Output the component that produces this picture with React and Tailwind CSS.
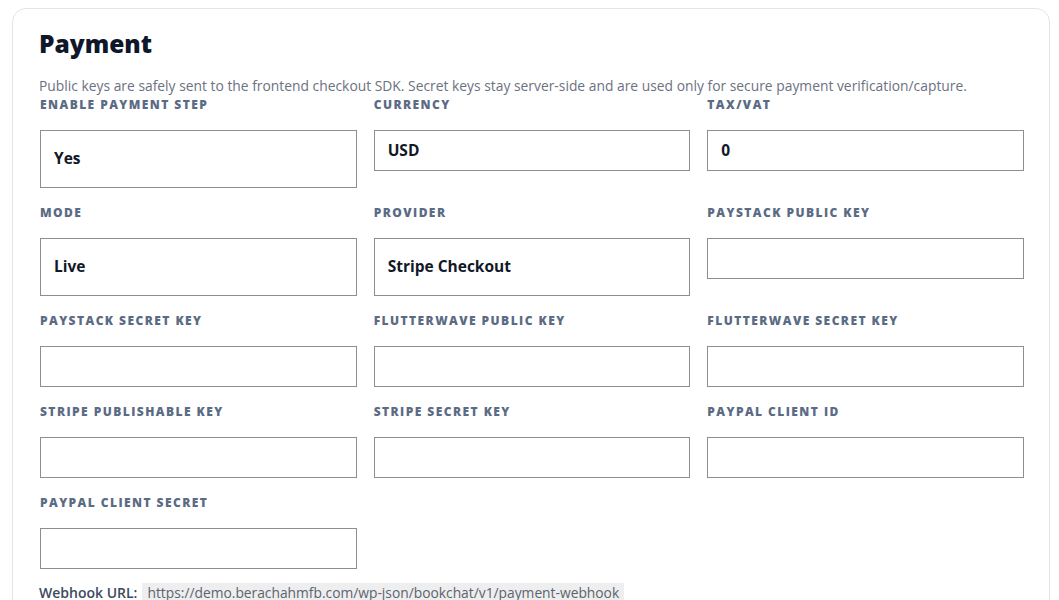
const fields = [
  { label: "Enable Payment Step", value: "Yes", select: true },
  { label: "Currency", value: "USD" },
  { label: "Tax/VAT", value: "0" },
  { label: "Mode", value: "Live", select: true },
  { label: "Provider", value: "Stripe Checkout", select: true },
  { label: "Paystack Public Key", value: "" },
  { label: "Paystack Secret Key", value: "" },
  { label: "Flutterwave Public Key", value: "" },
  { label: "Flutterwave Secret Key", value: "" },
  { label: "Stripe Publishable Key", value: "" },
  { label: "Stripe Secret Key", value: "" },
  { label: "PayPal Client ID", value: "" },
  { label: "PayPal Client Secret", value: "" },
];

const Field = ({ label, value, select }) => (
  <div className="flex flex-col">
    <label className="mb-[17px] h-4 text-[12px] font-extrabold uppercase leading-4 tracking-[0.12em] text-[#5b6b84]">
      {label}
    </label>
    <div
      className={
        "flex items-center border border-[#8c8c92] bg-white px-[13px] text-[15.5px] font-bold text-[#111827] " +
        (select ? "h-[58px]" : "h-[41px]")
      }
    >
      {value}
    </div>
  </div>
);

export default function App() {
  return (
    <div
      className="min-h-screen bg-white pl-3 pr-[9px] pt-2"
      style={{ fontFamily: '"Open Sans", "Noto Sans", sans-serif' }}
    >
      <div className="rounded-[14px] border border-[#dfe6ef] bg-white pb-10 pl-[26px] pr-[25px] pt-[19px]">
        <h2 className="h-8 text-[24.5px] font-extrabold leading-8 text-[#0f172a]">
          Payment
        </h2>
        <p className="mt-4 h-5 text-[13.85px] leading-5 text-[#6b7280]">
          Public keys are safely sent to the frontend checkout SDK. Secret keys
          stay server-side and are used only for secure payment
          verification/capture.
        </p>
        <div className="mt-px grid grid-cols-3 gap-x-[17px] gap-y-[17px] pl-px">
          {fields.map((f) => (
            <Field key={f.label} {...f} />
          ))}
        </div>
        <div className="mt-[14px] flex items-center gap-[5px] text-[14px] leading-5">
          <span className="font-semibold text-[#3d4a5c]">Webhook URL:</span>
          <code
            className="bg-[#eeeeee] px-[5px] text-[13.8px] text-[#5b6470]"
            style={{ fontFamily: '"Open Sans", "Noto Sans", sans-serif' }}
          >
            https://demo.berachahmfb.com/wp-json/bookchat/v1/payment-webhook
          </code>
        </div>
      </div>
    </div>
  );
}
